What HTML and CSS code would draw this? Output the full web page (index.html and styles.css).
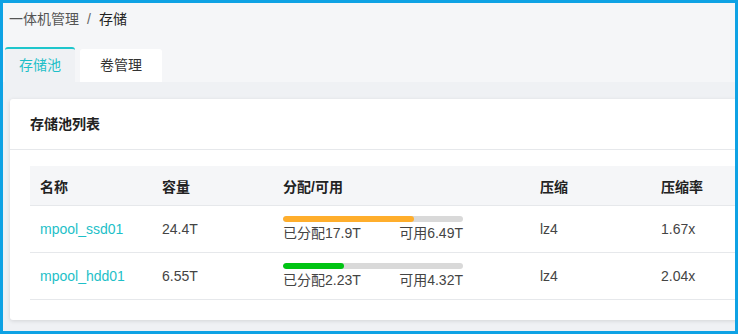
FILE: index.html
```html
<!DOCTYPE html>
<html lang="zh-CN">
<head>
  <meta charset="UTF-8">
  <title>存储</title>
  <link rel="stylesheet" href="styles.css">
</head>
<body>
  <div class="frame">
    <div class="crumb">
      <span class="crumb-parent">一体机管理</span><span class="crumb-sep">/</span><span class="crumb-current">存储</span>
    </div>
    <div class="tabs">
      <div class="tab active">存储池</div>
      <div class="tab">卷管理</div>
    </div>
    <div class="content">
      <div class="card">
        <div class="card-head">存储池列表</div>
        <div class="card-body">
          <table class="pool-table">
            <thead>
              <tr>
                <th class="c-name">名称</th>
                <th class="c-size">容量</th>
                <th class="c-alloc">分配/可用</th>
                <th class="c-comp">压缩</th>
                <th>压缩率</th>
              </tr>
            </thead>
            <tbody>
              <tr>
                <td><a class="pool-link">mpool_ssd01</a></td>
                <td>24.4T</td>
                <td>
                  <div class="bar"><div class="fill warn" style="width: 73%"></div></div>
                  <div class="bar-text"><span>已分配17.9T</span><span>可用6.49T</span></div>
                </td>
                <td>lz4</td>
                <td>1.67x</td>
              </tr>
              <tr>
                <td><a class="pool-link">mpool_hdd01</a></td>
                <td>6.55T</td>
                <td>
                  <div class="bar"><div class="fill ok" style="width: 34%"></div></div>
                  <div class="bar-text"><span>已分配2.23T</span><span>可用4.32T</span></div>
                </td>
                <td>lz4</td>
                <td>2.04x</td>
              </tr>
            </tbody>
          </table>
        </div>
      </div>
    </div>
  </div>
</body>
</html>
```
FILE: styles.css
```css
body { margin: 0; background: #fff; font-family: "Liberation Sans", "Noto Sans CJK SC", sans-serif; font-size: 14px; color: #444; }
.frame { width: 738px; height: 334px; box-sizing: border-box; border: 3px solid #0ea2e4; background: #f5f6f8; overflow: hidden; display: flex; flex-direction: column; }
.crumb { padding: 6px 0 0 6px; line-height: 20px; height: 20px; }
.crumb-parent { color: #555; }
.crumb-sep { margin: 0 8px; color: #666; }
.crumb-current { color: #222; }
.tabs { display: flex; align-items: flex-end; margin-top: 18px; padding-left: 2px; }
.tab { height: 33px; line-height: 33px; padding: 0 20px; background: #fff; color: #333; border-radius: 3px 3px 0 0; margin-left: 5px; }
.tab.active { height: 33px; padding: 0 14px; margin-left: 0; background: #eff1f4; color: #1ebfc8; border-top: 2px solid #1ec6cc; }
.content { flex: 1; background: #eff1f4; padding: 17px 0 0 7px; }
.card { width: 760px; background: #fff; border-radius: 3px; box-shadow: 0 1px 4px rgba(0, 0, 0, 0.12); }
.card-head { height: 50px; line-height: 50px; padding-left: 20px; font-weight: bold; color: #222; border-bottom: 1px solid #e6e8eb; }
.card-body { padding: 16px 0 20px 20px; }
.pool-table { border-collapse: collapse; width: 740px; table-layout: fixed; }
.pool-table th { height: 39px; text-align: left; font-weight: bold; color: #222; background: #f5f6f8; padding: 0 10px; border-bottom: 1px solid #e6e8eb; }
.pool-table td { height: 46px; padding: 0 10px; border-bottom: 1px solid #e6e8eb; color: #444; }
.c-name { width: 102px; }
.c-size { width: 101px; }
.c-alloc { width: 237px; }
.c-comp { width: 101px; }
.pool-link { color: #1ebfc8; cursor: pointer; }
.bar { width: 180px; height: 6px; background: #d9d9d9; border-radius: 3px; overflow: hidden; }
.fill { height: 100%; border-radius: 3px; }
.fill.warn { background: #ffae2c; }
.fill.ok { background: #00c413; }
.bar-text { width: 180px; display: flex; justify-content: space-between; line-height: 20px; margin-top: 1px; }
```
